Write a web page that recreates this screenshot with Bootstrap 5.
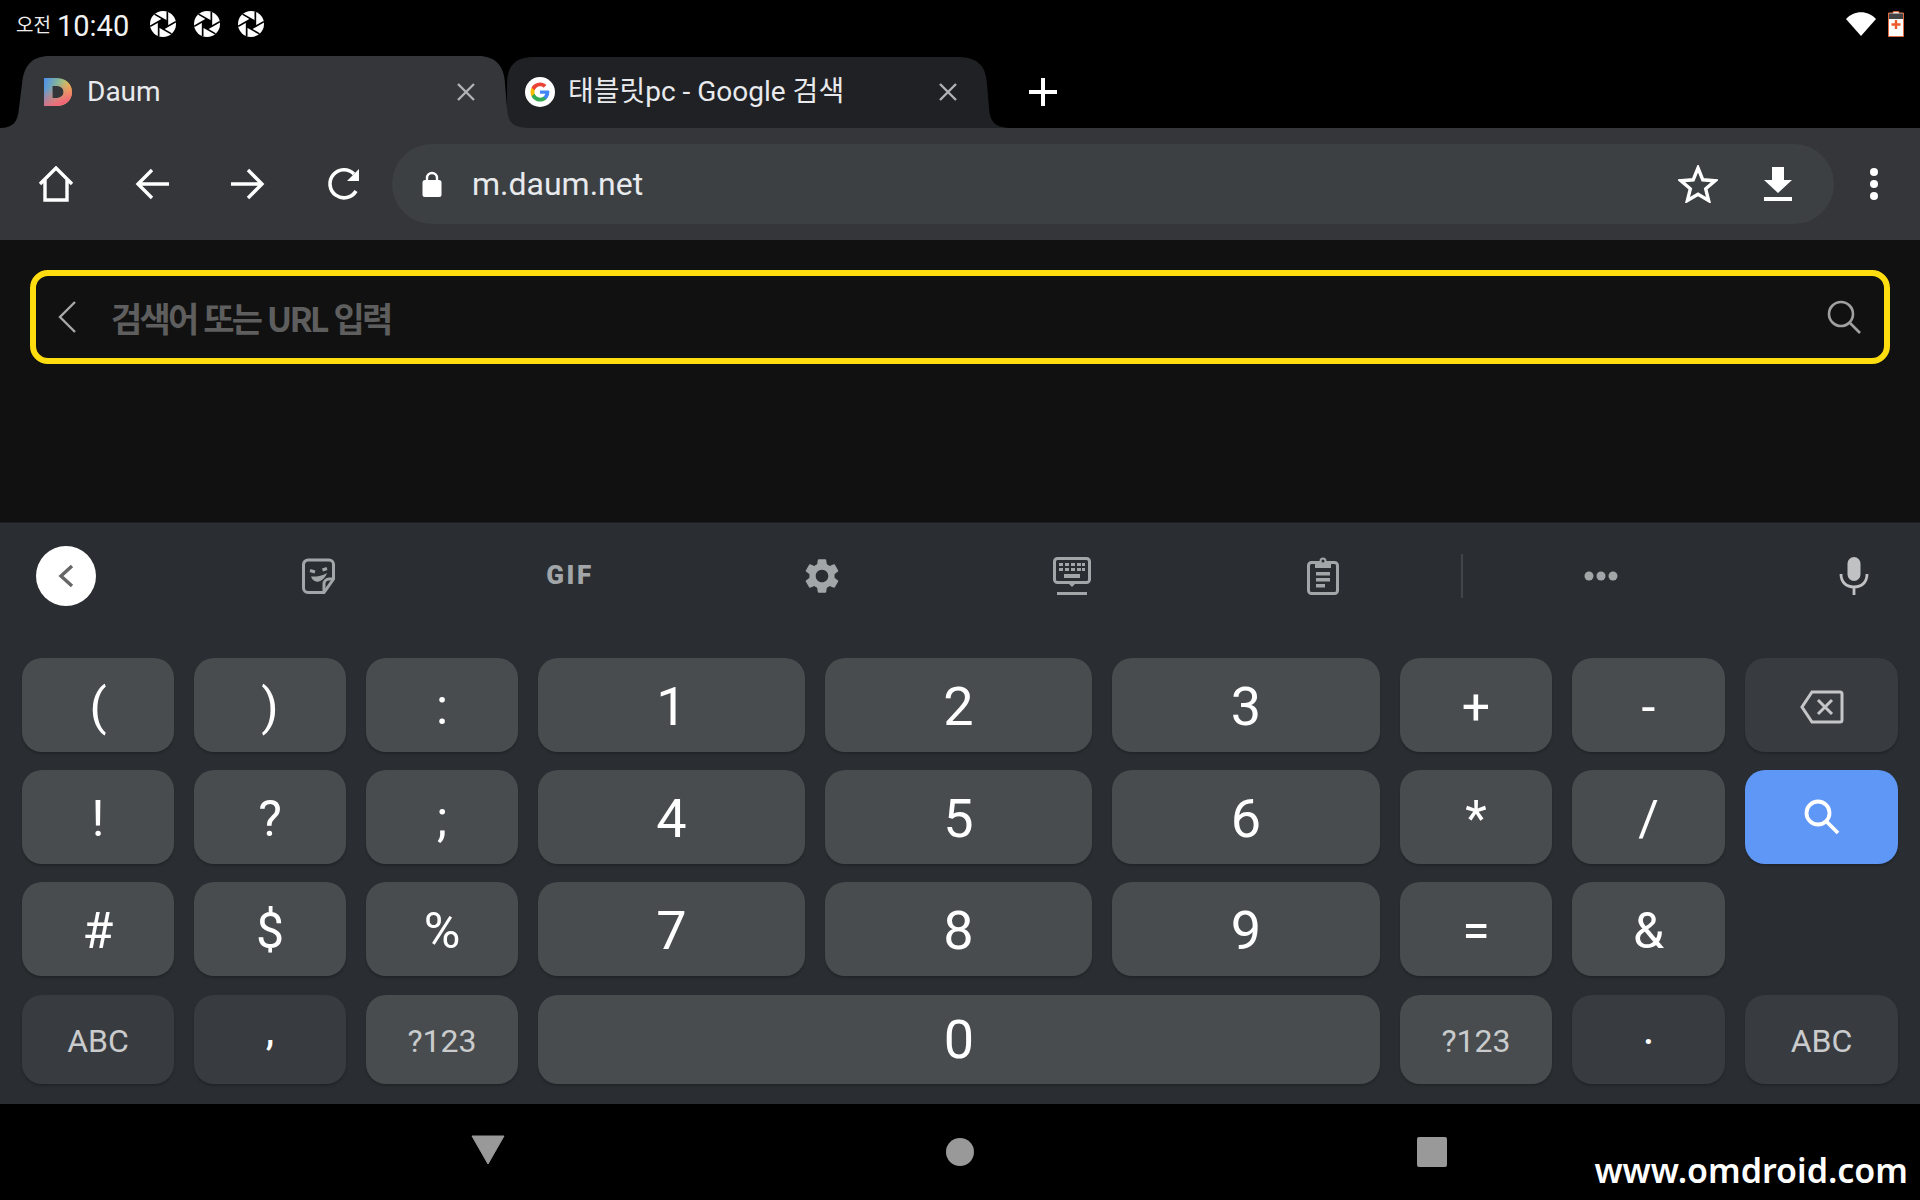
<!DOCTYPE html>
<html lang="ko">
<head>
  <meta charset="UTF-8">
  <meta name="viewport" content="width=device-width, initial-scale=1">
  <title>Daum - 검색</title>
  <link href="https://cdn.jsdelivr.net/npm/bootstrap@5.3.0/dist/css/bootstrap.min.css" rel="stylesheet">
  <style>
    html, body { margin: 0; background: #000; }
    body { width: 1920px; height: 1200px; overflow: hidden; position: relative; font-family: Roboto, "Noto Sans CJK KR", sans-serif; color: #fff; }

    .status-strip { height: 56px; padding: 0 16px 3px; }
    .status-ampm { font-size: 19px; margin-right: 6px; color: #eee; }
    .status-time { font-size: 29px; margin-right: 21px; color: #f2f2f2; }
    .status-aperture { margin-right: 18px; margin-bottom: 5px; }
    .status-wifi { margin-right: 12px; margin-bottom: 5px; }
    .status-battery { margin-bottom: 5px; }

    .tab-strip { height: 72px; }
    .tab-one, .tab-two { position: relative; height: 72px; flex: none; }
    .tab-one { width: 507px; z-index: 2; }
    .tab-two { width: 483px; z-index: 1; }
    .tab-shape { position: absolute; left: 0; top: 0; overflow: visible; }
    .tab-body { position: relative; height: 72px; }
    .tab-one .tab-body { padding: 0 31px 0 44px; }
    .tab-two .tab-body { padding: 0 32px 0 18px; }
    .tab-title { font-size: 28px; line-height: 40px; color: #e8eaed; margin-left: 15px; white-space: nowrap; }
    .tab-two .tab-title { margin-left: 13px; }
    .tab-plus { margin-left: 39px; }

    .tool-strip { height: 112px; background: #35363a; padding-left: 8px; }
    .tool-cell { width: 96px; flex: none; }
    .url-pill { width: 1442px; height: 80px; background: #3c4043; border-radius: 40px; padding: 0 16px 0 28px; flex: none; }
    .url-text { font-size: 32px; color: #e8eaed; margin-left: 28px; }
    .url-cell { width: 80px; }
    .menu-cell { width: 80px; }

    .page-area { height: 282px; background: #111; padding: 30px 30px 0; }
    .search-box { height: 94px; border: 6px solid #ffdd0e; border-radius: 18px; padding: 0 22px; }
    .search-hint { font-family: "Noto Sans CJK KR", sans-serif; font-weight: 700; font-size: 34px; letter-spacing: -2.8px; color: #5e5e5e; margin-left: 35px; }

    .kb-area { height: 582px; background: #2a2e32; border-top: 1px solid #1c1f22; }
    .kb-tools { height: 105px; padding-left: 36px; }
    .kb-back { width: 60px; height: 60px; background: #fff; border-radius: 50%; margin-right: 98px; flex: none; }
    .kb-cell { flex: none; }
    .kb-wide { width: 252px; }
    .kb-gear { width: 251px; }
    .kb-narrow { width: 250px; }
    .kb-more { width: 275px; }
    .kb-mic { margin-left: 101px; flex: none; }
    .kb-gif { font-weight: 900; font-size: 26px; letter-spacing: 2.5px; color: #a3a6a8; }
    .kb-divider { width: 2px; height: 44px; background: #42464a; margin-left: 12px; flex: none; }

    .key-grid { display: grid; grid-template-columns: 152px 152px 152px 267px 267px 268px 152px 153px 153px; grid-auto-rows: 94px; column-gap: 20px; row-gap: 18px; margin: 30px 0 0 22px; }
    .kb-key { background: #484c4f; border-radius: 20px; box-shadow: 0 2px 2px #222529; color: #fff; line-height: 1; }
    .kb-key-dark { background: #383c40; }
    .kb-key-blue { background: #5f97f6; }
    .kb-key-low { height: 89px; margin-top: 1px; }
    .kb-key-zero { grid-column: span 3; }
    .key-num { font-size: 54px; padding-top: 4px; }
    .key-sym { font-size: 50px; padding-top: 4px; }
    .key-num.kb-key-low { padding-top: 0; }
    .key-mark { font-size: 38px; font-weight: 500; padding-bottom: 18px; }
    .key-label { font-size: 32px; color: #c9cbcc; padding-top: 2px; }

    .nav-strip { height: 96px; }
    .nav-back { margin-left: 471px; margin-bottom: 4px; }
    .nav-home { width: 28px; height: 28px; border-radius: 50%; background: #999; margin-left: 441px; }
    .nav-recent { width: 30px; height: 30px; border-radius: 2px; background: #999; margin-left: 443px; }
    .site-mark { position: absolute; right: 12px; bottom: 4px; font-family: "Noto Sans", sans-serif; font-weight: 600; font-size: 34px; color: #fff; }
  </style>
</head>
<body>

  <svg class="d-none">
    <symbol id="apertureIcon" viewBox="0 0 26 26">
      <circle cx="13" cy="13" r="13" fill="#fff"/>
      <g transform="translate(13 13)" stroke="#000" stroke-width="1.7">
        <path d="M4.330 -2.500 L-8.450 -9.880"/>
        <path d="M4.330 -2.500 L-8.450 -9.880" transform="rotate(60)"/>
        <path d="M4.330 -2.500 L-8.450 -9.880" transform="rotate(120)"/>
        <path d="M4.330 -2.500 L-8.450 -9.880" transform="rotate(180)"/>
        <path d="M4.330 -2.500 L-8.450 -9.880" transform="rotate(240)"/>
        <path d="M4.330 -2.500 L-8.450 -9.880" transform="rotate(300)"/>
      </g>
      <path transform="translate(13 13)" d="M0 -5 L4.330 -2.500 V2.500 L0 5 L-4.330 2.500 V-2.500 Z" fill="#000"/>
    </symbol>
  </svg>

  <div class="status-strip d-flex align-items-center">
    <span class="status-ampm">오전</span>
    <span class="status-time">10:40</span>
    <svg class="status-aperture" width="26" height="26"><use href="#apertureIcon"/></svg>
    <svg class="status-aperture" width="26" height="26"><use href="#apertureIcon"/></svg>
    <svg class="status-aperture" width="26" height="26"><use href="#apertureIcon"/></svg>
    <div class="ms-auto d-flex align-items-center">
      <svg class="status-wifi" width="30" height="24" viewBox="0 0 30 24"><path d="M15 24 L0 7 C8 -2 22 -2 30 7 Z" fill="#fff"/></svg>
      <svg class="status-battery" width="16" height="26" viewBox="0 0 16 26"><path d="M5 2 V0.700 H11 V2 H15.500 V25.500 H0.500 V2 Z" fill="#fff" stroke="#e0683f"/><path d="M1 2.500 H15 V8 H1 Z" fill="#444"/><path d="M8 9 V18 M3.500 13.500 H12.500" stroke="#ee5a2a" stroke-width="2.400"/></svg>
    </div>
  </div>

  <div class="tab-strip d-flex">
    <div class="tab-one">
      <svg class="tab-shape" width="507" height="72" viewBox="0 0 507 72"><path d="M0 72 C13 72 18 66 19 52 L22 28 C24 9 32 0 50 0 H478 C495 0 504 9 505 28 L507 52 C508 66 512 72 530 72 Z" fill="#35363a"/></svg>
      <div class="tab-body d-flex align-items-center">
        <svg width="28" height="28" viewBox="0 0 28 28">
          <defs>
            <linearGradient id="daumBase" x1="0" y1="0" x2="1" y2=".3"><stop offset="0" stop-color="#4b8ff0"/><stop offset=".5" stop-color="#86b59a"/><stop offset="1" stop-color="#f8d53b"/></linearGradient>
            <linearGradient id="daumWarm" x1="0" y1="0" x2=".45" y2="1"><stop offset=".35" stop-color="#f2647a" stop-opacity="0"/><stop offset="1" stop-color="#f2647a"/></linearGradient>
          </defs>
          <path fill="url(#daumBase)" fill-rule="evenodd" d="M0 0 H12 C22 0 28 6 28 14 C28 22 22 28 12 28 H0 Z M8.500 8 V20 H12 C17 20 19.500 17.500 19.500 14 C19.500 10.500 17 8 12 8 Z"/>
          <path fill="url(#daumWarm)" fill-rule="evenodd" d="M0 0 H12 C22 0 28 6 28 14 C28 22 22 28 12 28 H0 Z M8.500 8 V20 H12 C17 20 19.500 17.500 19.500 14 C19.500 10.500 17 8 12 8 Z"/>
        </svg>
        <span class="tab-title">Daum</span>
        <svg class="ms-auto" width="20" height="20" viewBox="0 0 20 20"><path d="M2 2 L18 18 M18 2 L2 18" stroke="#b0b2b4" stroke-width="2.400"/></svg>
      </div>
    </div>
    <div class="tab-two">
      <svg class="tab-shape" width="483" height="72" viewBox="0 0 483 72"><path d="M0 28 C0 9 9 1 27 1 H450 C470 1 479 9 480 28 L482 52 C483 66 488 72 505 72 H0 Z" fill="#202124"/></svg>
      <div class="tab-body d-flex align-items-center">
        <svg width="30" height="30" viewBox="0 0 30 30"><circle cx="15" cy="15" r="15" fill="#fff"/><g transform="translate(5.500 5.500) scale(.396)"><path fill="#4285F4" d="M47.500 24.500c0-1.600-.1-3.100-.4-4.500H24v8.700h13.200c-.6 3-2.300 5.600-4.900 7.300v6h7.900c4.600-4.300 7.300-10.500 7.300-17.500z"/><path fill="#34A853" d="M24 48c6.500 0 11.900-2.100 15.900-5.800L32 36c-2.200 1.500-5 2.300-8 2.300-6.200 0-11.500-4.200-13.400-9.800H2.500v6.200C6.400 42.600 14.600 48 24 48z"/><path fill="#FBBC05" d="M10.600 28.500c-.5-1.400-.7-3-.7-4.500s.3-3.100.7-4.500v-6.200H2.500C.9 16.500 0 20.100 0 24s.9 7.500 2.500 10.700l8.100-6.200z"/><path fill="#EA4335" d="M24 9.500c3.500 0 6.700 1.200 9.200 3.600l6.900-6.900C35.900 2.400 30.500 0 24 0 14.600 0 6.400 5.400 2.500 13.300l8.100 6.200c1.900-5.700 7.200-10 13.400-10z"/></g></svg>
        <span class="tab-title">태블릿pc - Google 검색</span>
        <svg class="ms-auto" width="20" height="20" viewBox="0 0 20 20"><path d="M2 2 L18 18 M18 2 L2 18" stroke="#b0b2b4" stroke-width="2.400"/></svg>
      </div>
    </div>
    <div class="tab-plus d-flex align-items-center">
      <svg width="28" height="28" viewBox="0 0 28 28"><path d="M14 0 V28 M0 14 H28" stroke="#fff" stroke-width="4"/></svg>
    </div>
  </div>

  <div class="tool-strip d-flex align-items-center">
    <div class="tool-cell d-flex justify-content-center"><svg width="36" height="36" viewBox="0 0 36 36" fill="none" stroke="#fff" stroke-width="3.400"><path d="M2 18 L18 2 L34 18 M7 14 V34 H29 V14"/></svg></div>
    <div class="tool-cell d-flex justify-content-center"><svg width="34" height="32" viewBox="0 0 34 32" fill="none" stroke="#fff" stroke-width="3.400"><path d="M34 16 H3 M17 2 L3 16 L17 30"/></svg></div>
    <div class="tool-cell d-flex justify-content-center"><svg width="34" height="32" viewBox="0 0 34 32" fill="none" stroke="#fff" stroke-width="3.400"><path d="M0 16 H31 M17 2 L31 16 L17 30"/></svg></div>
    <div class="tool-cell d-flex justify-content-center"><svg width="34" height="34" viewBox="0 0 34 34" fill="none"><path d="M29 24 A14 14 0 1 1 27 7" stroke="#fff" stroke-width="3.600"/><path d="M32 2 V14 H20 Z" fill="#fff"/></svg></div>
    <div class="url-pill d-flex align-items-center">
      <svg width="24" height="26" viewBox="0 0 24 26"><path d="M7 10 V7 A5 5 0 0 1 17 7 V10" fill="none" stroke="#fff" stroke-width="2.400"/><rect x="2.500" y="9" width="19" height="17" rx="2.500" fill="#fff"/></svg>
      <span class="url-text">m.daum.net</span>
      <div class="url-cell ms-auto d-flex justify-content-center"><svg width="40" height="38" viewBox="0 0 40 38" fill="none" stroke="#fff" stroke-width="3.400"><path d="M20 3 L24.800 14.800 L37 15.800 L27.700 23.800 L30.600 35.500 L20 29.200 L9.400 35.500 L12.300 23.800 L3 15.800 L15.200 14.800 Z"/></svg></div>
      <div class="url-cell d-flex justify-content-center"><svg width="30" height="34" viewBox="0 0 30 34" fill="#fff"><path d="M9 0 H21 V13 H29 L15 26 L1 13 H9 Z"/><rect x="1" y="30" width="28" height="4"/></svg></div>
    </div>
    <div class="menu-cell d-flex justify-content-center"><svg width="8" height="32" viewBox="0 0 8 32" fill="#fff"><circle cx="4" cy="4" r="4"/><circle cx="4" cy="16" r="4"/><circle cx="4" cy="28" r="4"/></svg></div>
  </div>

  <div class="page-area">
    <div class="search-box d-flex align-items-center">
      <svg width="18" height="32" viewBox="0 0 18 32" fill="none" stroke="#a8a8a8" stroke-width="2.400"><path d="M17 1 L2 16 L17 31"/></svg>
      <span class="search-hint">검색어 또는 URL 입력</span>
      <svg class="ms-auto" width="36" height="36" viewBox="0 0 36 36" fill="none" stroke="#a0a0a0" stroke-width="2.600"><circle cx="15" cy="15" r="12"/><path d="M24 24 L34 34"/></svg>
    </div>
  </div>

  <div class="kb-area">
    <div class="kb-tools d-flex align-items-center">
      <div class="kb-back d-flex align-items-center justify-content-center"><svg width="16" height="24" viewBox="0 0 16 24" fill="none" stroke="#666" stroke-width="3.400"><path d="M14 2 L3 12 L14 22"/></svg></div>
      <div class="kb-cell kb-narrow d-flex justify-content-center"><svg width="34" height="36" viewBox="0 0 34 36" fill="none" stroke="#a3a6a8" stroke-width="3"><path d="M6 2 H27 A4.500 4.500 0 0 1 31.500 6.500 V21 L22 34.500 H6 A4.500 4.500 0 0 1 1.500 30 V6.500 A4.500 4.500 0 0 1 6 2 Z"/><path d="M31 21 H27 A5 5 0 0 0 22 26 V34"/><path d="M9 18.500 C14 19 20 18 25 15 C23 21 18 24.500 14 23.500 C11.500 23 9.800 21 9 18.500 Z" fill="#a3a6a8" stroke="none"/><path d="M8 12.500 L13 14 M20.500 12 L25 10.500" stroke-width="3"/></svg></div>
      <div class="kb-cell kb-wide d-flex justify-content-center"><span class="kb-gif">GIF</span></div>
      <div class="kb-cell kb-gear d-flex justify-content-center"><svg width="42" height="42" viewBox="0 0 24 24" fill="#a3a6a8"><path d="M19.140 12.940c.04-.3.06-.61.06-.94 0-.32-.02-.64-.07-.94l2.030-1.580c.18-.14.23-.41.12-.61l-1.920-3.320c-.12-.22-.37-.29-.59-.22l-2.390.96c-.5-.38-1.030-.7-1.620-.94l-.36-2.540c-.04-.24-.24-.41-.48-.41h-3.840c-.24 0-.43.17-.47.41l-.36 2.540c-.59.24-1.130.57-1.620.94l-2.390-.96c-.22-.08-.47 0-.59.22L2.740 8.870c-.12.21-.08.47.12.61l2.030 1.580c-.05.3-.09.63-.09.94s.02.64.07.94l-2.030 1.580c-.18.14-.23.41-.12.61l1.920 3.320c.12.22.37.29.59.22l2.390-.96c.5.38 1.030.7 1.620.94l.36 2.540c.05.24.24.41.48.41h3.840c.24 0 .44-.17.47-.41l.36-2.540c.59-.24 1.130-.56 1.620-.94l2.390.96c.22.08.47 0 .59-.22l1.920-3.320c.12-.22.07-.47-.12-.61l-2.010-1.580zM12 15.600c-1.980 0-3.600-1.620-3.600-3.600s1.620-3.600 3.600-3.600 3.600 1.620 3.600 3.600-1.620 3.600-3.600 3.600z"/></svg></div>
      <div class="kb-cell kb-narrow d-flex justify-content-center"><svg width="38" height="38" viewBox="0 0 38 38"><rect x="1.500" y="1.500" width="35" height="24" rx="3" fill="none" stroke="#a3a6a8" stroke-width="3"/><g fill="#a3a6a8"><path d="M6 6 h4 v3 h-4z M12 6 h4 v3 h-4z M18 6 h4 v3 h-4z M24 6 h4 v3 h-4z M29 6 h3 v3 h-3z M6 11 h4 v3 h-4z M12 11 h4 v3 h-4z M18 11 h4 v3 h-4z M24 11 h4 v3 h-4z M29 11 h3 v3 h-3z M11 17 h16 v4 h-16z M15 26 h8 l-4 4z"/><rect x="4" y="35" width="30" height="3"/></g></svg></div>
      <div class="kb-cell kb-wide d-flex justify-content-center"><svg width="32" height="38" viewBox="0 0 32 38"><rect x="1.500" y="5.500" width="29" height="31" rx="3" fill="none" stroke="#a3a6a8" stroke-width="3"/><path d="M8 4 H12.500 A3.500 3.500 0 0 1 19.500 4 H24 V11 H8 Z" fill="#a3a6a8"/><circle cx="16" cy="4" r="1.500" fill="#2a2e32"/><path d="M9 15 H23 V18.500 H9 Z M9 21 H23 V24.500 H9 Z M9 27 H18 V30.500 H9 Z" fill="#a3a6a8"/></svg></div>
      <div class="kb-divider"></div>
      <div class="kb-cell kb-more d-flex justify-content-center"><svg width="34" height="10" viewBox="0 0 34 10" fill="#a3a6a8"><circle cx="5" cy="5" r="4.500"/><circle cx="17" cy="5" r="4.500"/><circle cx="29" cy="5" r="4.500"/></svg></div>
      <svg class="kb-mic" width="30" height="38" viewBox="0 0 30 38" fill="none"><rect x="8.500" y="0" width="13" height="24" rx="6.500" fill="#bfc1c3"/><path d="M2 17 C2 26 8 30 15 30 C22 30 28 26 28 17 M15 30 V38" stroke="#bfc1c3" stroke-width="2.800"/></svg>
    </div>

    <div class="key-grid">
      <div class="kb-key key-sym d-flex align-items-center justify-content-center">(</div>
      <div class="kb-key key-sym d-flex align-items-center justify-content-center">)</div>
      <div class="kb-key key-sym d-flex align-items-center justify-content-center">:</div>
      <div class="kb-key key-num d-flex align-items-center justify-content-center">1</div>
      <div class="kb-key key-num d-flex align-items-center justify-content-center">2</div>
      <div class="kb-key key-num d-flex align-items-center justify-content-center">3</div>
      <div class="kb-key key-sym d-flex align-items-center justify-content-center">+</div>
      <div class="kb-key key-sym d-flex align-items-center justify-content-center">-</div>
      <div class="kb-key kb-key-dark d-flex align-items-center justify-content-center"><svg class="mt-1" width="44" height="34" viewBox="0 0 44 34" fill="none" stroke="#c4c6c7" stroke-width="3"><path d="M12 2 H40 A2 2 0 0 1 42 4 V30 A2 2 0 0 1 40 32 H12 L2 17 Z"/><path d="M18 10 L32 24 M32 10 L18 24"/></svg></div>

      <div class="kb-key key-sym d-flex align-items-center justify-content-center">!</div>
      <div class="kb-key key-sym d-flex align-items-center justify-content-center">?</div>
      <div class="kb-key key-sym d-flex align-items-center justify-content-center">;</div>
      <div class="kb-key key-num d-flex align-items-center justify-content-center">4</div>
      <div class="kb-key key-num d-flex align-items-center justify-content-center">5</div>
      <div class="kb-key key-num d-flex align-items-center justify-content-center">6</div>
      <div class="kb-key key-sym d-flex align-items-center justify-content-center">*</div>
      <div class="kb-key key-sym d-flex align-items-center justify-content-center">/</div>
      <div class="kb-key kb-key-blue d-flex align-items-center justify-content-center"><svg width="36" height="36" viewBox="0 0 36 36" fill="none" stroke="#fff" stroke-width="3.800"><circle cx="14" cy="14" r="11.500"/><path d="M22 22 L34 34"/></svg></div>

      <div class="kb-key key-sym d-flex align-items-center justify-content-center">#</div>
      <div class="kb-key key-sym d-flex align-items-center justify-content-center">$</div>
      <div class="kb-key key-sym d-flex align-items-center justify-content-center">%</div>
      <div class="kb-key key-num d-flex align-items-center justify-content-center">7</div>
      <div class="kb-key key-num d-flex align-items-center justify-content-center">8</div>
      <div class="kb-key key-num d-flex align-items-center justify-content-center">9</div>
      <div class="kb-key key-sym d-flex align-items-center justify-content-center">=</div>
      <div class="kb-key key-sym d-flex align-items-center justify-content-center">&amp;</div>
      <div></div>

      <div class="kb-key kb-key-dark kb-key-low key-label d-flex align-items-center justify-content-center">ABC</div>
      <div class="kb-key kb-key-dark kb-key-low key-mark d-flex align-items-center justify-content-center">,</div>
      <div class="kb-key kb-key-low key-label d-flex align-items-center justify-content-center">?123</div>
      <div class="kb-key kb-key-low kb-key-zero key-num d-flex align-items-center justify-content-center">0</div>
      <div class="kb-key kb-key-low key-label d-flex align-items-center justify-content-center">?123</div>
      <div class="kb-key kb-key-dark kb-key-low key-mark d-flex align-items-center justify-content-center">.</div>
      <div class="kb-key kb-key-dark kb-key-low key-label d-flex align-items-center justify-content-center">ABC</div>
    </div>
  </div>

  <div class="nav-strip d-flex align-items-center">
    <svg class="nav-back" width="34" height="30" viewBox="0 0 34 30"><path d="M1 1 H33 L17 29 Z" fill="#999" stroke="#999" stroke-linejoin="round"/></svg>
    <div class="nav-home"></div>
    <div class="nav-recent"></div>
  </div>
  <div class="site-mark">www.omdroid.com</div>

  <script src="https://cdn.jsdelivr.net/npm/bootstrap@5.3.0/dist/js/bootstrap.bundle.min.js"></script>
</body>
</html>
